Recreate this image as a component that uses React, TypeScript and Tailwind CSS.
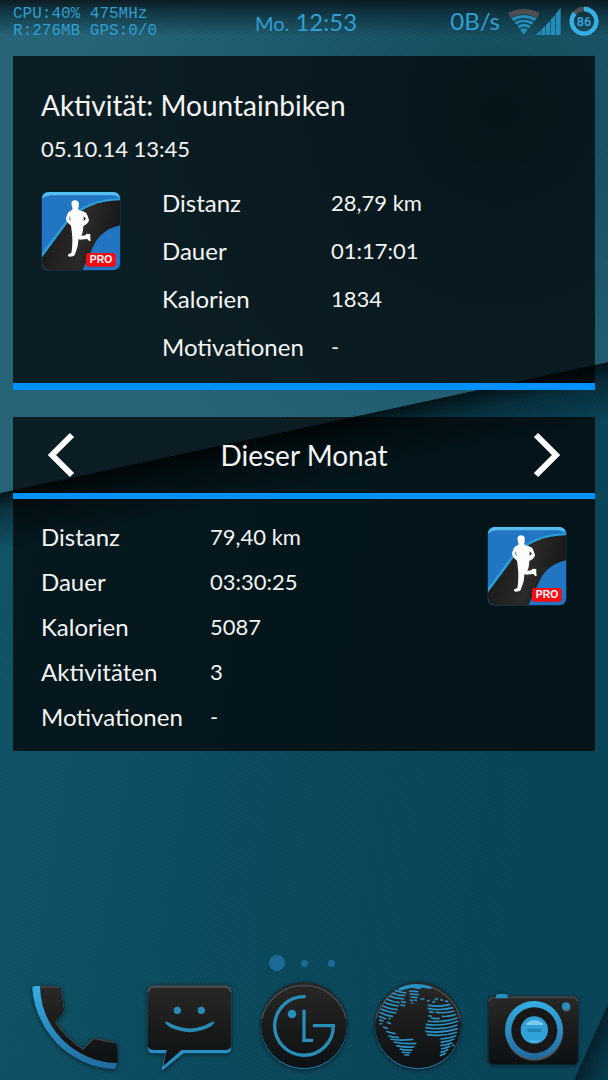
import type { ReactNode } from 'react';

type Stat = { label: string; value: string };

const ACTIVITY_STATS: Stat[] = [
  { label: 'Distanz', value: '28,79 km' },
  { label: 'Dauer', value: '01:17:01' },
  { label: 'Kalorien', value: '1834' },
  { label: 'Motivationen', value: '-' },
];

const MONTH_STATS: Stat[] = [
  { label: 'Distanz', value: '79,40 km' },
  { label: 'Dauer', value: '03:30:25' },
  { label: 'Kalorien', value: '5087' },
  { label: 'Aktivitäten', value: '3' },
  { label: 'Motivationen', value: '-' },
];

function Wallpaper() {
  return (
    <svg
      className="absolute inset-0 -z-10 h-full w-full"
      viewBox="0 0 608 1080"
      preserveAspectRatio="none"
      aria-hidden="true"
    >
      <defs>
        <linearGradient id="wp-base" x1="0" y1="0" x2="1" y2="0.3">
          <stop offset="0" stopColor="#13586c" />
          <stop offset="0.6" stopColor="#0c4b5f" />
          <stop offset="1" stopColor="#0a465a" />
        </linearGradient>
        <radialGradient id="wp-sheet" gradientUnits="userSpaceOnUse" cx="500" cy="110" r="420">
          <stop offset="0" stopColor="#124b5c" />
          <stop offset="0.55" stopColor="#205c6f" />
          <stop offset="1" stopColor="#276679" />
        </radialGradient>
        <linearGradient id="wp-shadow" gradientUnits="userSpaceOnUse" x1="304" y1="427" x2="316" y2="483">
          <stop offset="0" stopColor="#020b0f" stopOpacity="0.88" />
          <stop offset="0.35" stopColor="#021015" stopOpacity="0.45" />
          <stop offset="1" stopColor="#021015" stopOpacity="0" />
        </linearGradient>
        <linearGradient id="wp-top" x1="0" y1="0" x2="0" y2="1">
          <stop offset="0" stopColor="#0a161b" stopOpacity="0.92" />
          <stop offset="0.4" stopColor="#08222c" stopOpacity="0.6" />
          <stop offset="1" stopColor="#08222c" stopOpacity="0" />
        </linearGradient>
        <linearGradient id="wp-corner" gradientUnits="userSpaceOnUse" x1="586" y1="1056" x2="616" y2="1070">
          <stop offset="0" stopColor="#031c26" stopOpacity="0.85" />
          <stop offset="1" stopColor="#04303f" stopOpacity="0.3" />
        </linearGradient>
        <pattern id="wp-weave" width="4" height="4" patternUnits="userSpaceOnUse">
          <path d="M-1 5L5 -1M-1 1L1 -1M3 5L5 3" stroke="#000" strokeWidth="1" strokeOpacity="0.08" />
        </pattern>
      </defs>
      <rect width="608" height="1080" fill="url(#wp-base)" />
      <path d="M0 493L608 362V440L0 570Z" fill="url(#wp-shadow)" />
      <path d="M0 0H608V362L0 493Z" fill="url(#wp-sheet)" />
      <path d="M608 1004V1080H574Z" fill="url(#wp-corner)" />
      <rect width="608" height="1080" fill="url(#wp-weave)" />
      <rect width="608" height="36" fill="url(#wp-top)" />
    </svg>
  );
}

function StatusBar() {
  return (
    <header className="grid h-[45px] grid-cols-[1fr_auto_1fr] items-center pr-[9px] pl-[13px] text-[#2f9fd3]">
      <p className="font-['Liberation_Mono',monospace] text-[16px] leading-[17px] whitespace-nowrap">
        CPU:40% 475MHz
        <br />
        R:276MB GPS:0/0
      </p>
      <p className="text-[24px] leading-8 whitespace-nowrap">
        <span className="text-[20px]">Mo.</span> 12:53
      </p>
      <div className="flex items-center justify-end pb-1">
        <span className="pr-2 text-[24px] leading-8">0B/s</span>
        <svg className="-mr-1" width="32" height="30" viewBox="608 15 96 90" role="img" aria-label="WLAN">
          <path d="M608 36Q655 12 703 36L696 51Q655 28 616 51Z" fill="#4b4f52" />
          <path d="M618 52Q655 32 694 52L688 60Q655 42 624 60Z" fill="#258bb8" />
          <path d="M627 63Q655 48 685 63L679 71Q655 57 633 71Z" fill="#258bb8" />
          <path d="M636 74Q655 62 676 74L670 82Q655 73 642 82Z" fill="#258bb8" />
          <path d="M644 86Q655 78 667 86L655 101Z" fill="#258bb8" />
        </svg>
        <svg width="25" height="30" viewBox="694 15 75 90" role="img" aria-label="Mobilfunk">
          <path
            d="M694 102L708 88V102ZM710 86L722 74V102H710ZM724 72L736 59V102H724ZM738 56L751 42V102H738ZM753 39L768 20V102H753Z"
            fill="#258bb8"
          />
        </svg>
        <svg className="ml-2" width="30" height="30" viewBox="793 15 90 90" role="img" aria-label="Akku 86">
          <circle cx="838" cy="61" r="37" fill="none" stroke="#4b4f52" strokeWidth="13" />
          <circle
            cx="838"
            cy="61"
            r="37"
            fill="none"
            stroke="#36aee6"
            strokeWidth="13"
            pathLength="100"
            strokeDasharray="86 14"
            transform="rotate(-90 838 61)"
          />
          <text
            x="838"
            y="74"
            textAnchor="middle"
            fontSize="38"
            fontWeight="500"
            fill="#36aee6"
            fontFamily="Roboto, sans-serif"
          >
            86
          </text>
        </svg>
      </div>
    </header>
  );
}

function RunnerIcon() {
  return (
    <svg className="shrink-0" width="80" height="80" viewBox="33 35 240 240" role="img" aria-label="Runtastic PRO">
      <defs>
        <clipPath id="runner-clip">
          <rect x="36" y="38" width="234" height="234" rx="20" />
        </clipPath>
        <linearGradient id="runner-road" x1="0" y1="0" x2="1" y2="0.2">
          <stop offset="0" stopColor="#151515" />
          <stop offset="0.6" stopColor="#2b2a29" />
          <stop offset="1" stopColor="#181818" />
        </linearGradient>
      </defs>
      <rect x="34" y="37" width="238" height="237" rx="22" fill="#0f3551" />
      <g clipPath="url(#runner-clip)">
        <rect x="36" y="38" width="234" height="234" fill="#2275c3" />
        <path d="M36 38H270V58Q264 49 246 48H62Q46 49 36 58Z" fill="#55bdf0" />
        <path d="M36 220L110 122Q170 58 270 57V272H36Z" fill="#2b9fd9" />
        <path d="M36 234L116 126Q176 64 270 63V272H36Z" fill="url(#runner-road)" />
        <path d="M270 138Q216 150 192 196Q180 222 158 272H270Z" fill="#2275c3" />
      </g>
      <path
        fill="#fdfdfd"
        fillRule="evenodd"
        d="M126 66Q135 59 144 66Q148 72 146 80Q146 86 144 89Q147 94 159 96Q170 99 172 108L177 121Q178 127 169 135L160 140L159 152Q158 163 154 169L166 168L170 163L181 164Q180 170 182 184L178 186L172 179L149 181L146 178Q144 190 143 201Q139 214 134 227Q131 232 118 232Q111 229 116 224L124 221Q127 207 127 184Q127 169 125 155L123 139L114 131Q107 123 108 116L114 100Q118 95 126 92Q129 89 126 82Q123 72 126 66ZM120 109L117 117Q117 121 122 125ZM161 111L161 125L168 118Z"
      />
      <rect x="168" y="221" width="89" height="41" rx="8" fill="#fb0a12" />
      <text
        x="213"
        y="252"
        textAnchor="middle"
        fontSize="31"
        fontWeight="700"
        fill="#fff"
        fontFamily="'Liberation Sans', sans-serif"
      >
        PRO
      </text>
    </svg>
  );
}

function StatTable({ stats, rowClass }: { stats: Stat[]; rowClass: string }) {
  return (
    <table className="text-left leading-8">
      <tbody>
        {stats.map((stat) => (
          <tr key={stat.label} className={rowClass}>
            <th scope="row" className="w-[169px] p-0 text-[24px] font-normal">
              {stat.label}
            </th>
            <td className="p-0 text-[22px] whitespace-nowrap">{stat.value}</td>
          </tr>
        ))}
      </tbody>
    </table>
  );
}

function ActivityCard() {
  return (
    <section className="border-b-[7px] border-[#0091ff] bg-black/70 px-7 pt-[31px] pb-3">
      <h1 className="text-[28px] leading-9">Aktivität: Mountainbiken</h1>
      <p className="mt-[10px] text-[22px] leading-8">05.10.14 13:45</p>
      <div className="mt-[14px] flex items-start gap-[41px]">
        <div className="pt-3">
          <RunnerIcon />
        </div>
        <StatTable stats={ACTIVITY_STATS} rowClass="h-12" />
      </div>
    </section>
  );
}

function MonthCard() {
  return (
    <section className="bg-black/70">
      <div className="flex h-[82px] items-center justify-between border-b-[6px] border-[#0091ff] px-8">
        <button type="button" aria-label="Vorheriger Monat">
          <svg width="32" height="48" viewBox="0 0 32 48" fill="none" stroke="#fff" strokeWidth="6">
            <path d="M27 4L7 24L27 44" />
          </svg>
        </button>
        <h2 className="text-[28px] leading-9">Dieser Monat</h2>
        <button type="button" aria-label="Nächster Monat">
          <svg width="32" height="48" viewBox="0 0 32 48" fill="none" stroke="#fff" strokeWidth="6">
            <path d="M5 4L25 24L5 44" />
          </svg>
        </button>
      </div>
      <div className="flex items-start justify-between px-7 pt-[15px] pb-3">
        <StatTable stats={MONTH_STATS} rowClass="h-[45px]" />
        <div className="pt-3">
          <RunnerIcon />
        </div>
      </div>
    </section>
  );
}

function PhoneIcon() {
  return (
    <svg width="96" height="96" viewBox="81 30 288 288" aria-hidden="true">
      <path
        d="M97 56Q97 48 106 48H178Q184 49 184 57L192 116Q194 124 187 131L167 156Q199 206 249 237L277 208Q284 203 290 206L344 216Q351 219 352 227L350 287Q348 297 338 297Q246 292 172 222Q104 147 97 56Z"
        fill="url(#dock-blue)"
      />
      <path
        d="M120 48H178Q184 49 184 57L192 116Q194 124 187 131L167 156Q199 206 249 237L277 208Q284 203 290 206L344 216Q351 219 352 227V279Q262 278 190 212Q122 144 120 48Z"
        fill="url(#dock-dark)"
      />
      <path
        d="M120 51H180M167 156Q199 206 249 237L278 208Q284 204 290 207L346 218"
        fill="none"
        stroke="#3f4548"
        strokeWidth="4"
      />
    </svg>
  );
}

function MessageIcon() {
  return (
    <svg width="96" height="96" viewBox="426 30 288 288" aria-hidden="true">
      <path
        d="M443 64Q443 46 461 46H676Q694 46 694 64V232Q694 250 676 250H551L488 300Q483 299 486 292L497 250H461Q443 250 443 232Z"
        fill="#288fc0"
      />
      <path
        d="M443 62Q443 46 461 46H676Q694 46 694 62V226Q694 239 678 240H545L490 288L500 240H460Q443 239 443 226Z"
        fill="url(#dock-dark)"
      />
      <path d="M445 66Q446 50 462 50H676Q691 50 692 66" fill="none" stroke="#4a5054" strokeWidth="6" />
      <circle cx="532" cy="121" r="11" fill="#278bb8" />
      <circle cx="604" cy="121" r="11" fill="#278bb8" />
      <path d="M495 156Q500 152 505 157Q569 194 635 156Q640 152 643 157Q640 166 628 172Q570 201 510 172Q498 165 495 156Z" fill="#278bb8" />
    </svg>
  );
}

function LgIcon() {
  return (
    <svg width="96" height="96" viewBox="48 120 288 288" aria-hidden="true">
      <circle cx="192" cy="259" r="129" fill="#287fae" />
      <circle cx="192" cy="256" r="129" fill="url(#dock-dark)" />
      <path d="M66 236A129 127 0 0 1 318 236" fill="none" stroke="#4a5054" strokeWidth="4" />
      <g fill="none" stroke="#278db9" strokeWidth="10">
        <path d="M197 170A88 88 0 1 0 280 257H219" />
        <path d="M192 209V301H219" />
      </g>
      <circle cx="156" cy="222" r="13" fill="#278db9" />
    </svg>
  );
}

function GlobeIcon() {
  return (
    <svg width="96" height="96" viewBox="3 15 288 288" aria-hidden="true">
      <circle cx="147" cy="154" r="129" fill="#287fae" />
      <circle cx="147" cy="151" r="129" fill="url(#dock-dark)" />
      <path d="M21 131A129 127 0 0 1 273 131" fill="none" stroke="#4a5054" strokeWidth="4" />
      <path d="M88 40Q138 16 190 36L184 42L160 38L150 43L128 38L104 44L92 48Z" fill="#2791c4" />
      <g fill="none" stroke="#2791c4" strokeWidth="5">
        {/* North America */}
        <path d="M78 46Q92 52 112 54M68 54Q88 62 108 62M60 63Q80 71 106 72M52 72Q70 81 92 83M96 80L110 82M46 82Q64 91 90 93M94 90L108 92M40 92Q58 101 86 104M36 102Q54 111 82 114M32 112Q48 121 72 125M30 123Q40 129 52 132M30 134L44 139M58 130L64 132M54 142L66 146M32 145L38 148M42 156L56 160" />
        {/* Greenland */}
        <path d="M120 48L148 50M122 57L150 59M124 66L146 68M122 75L132 77M136 75L144 77M127 84L133 84M154 72L166 72" />
        {/* South America */}
        <path d="M52 169Q64 174 80 176M58 182Q70 186 90 188M64 192Q90 198 132 193M74 201Q106 208 142 205M82 212Q108 218 136 216M92 222Q110 227 130 225M98 231Q110 234 124 233M106 240L120 240" />
        {/* Europe and Asia */}
        <path d="M174 78L182 76M190 82L198 80M204 68V76M214 74L222 76M196 73L200 73M228 78L238 80M176 90Q206 98 244 88M176 100Q214 108 252 98M180 110L194 112M200 112Q230 116 256 108M178 122L188 124M186 128Q196 132 212 130M218 124Q240 126 262 118" />
        {/* Africa */}
        <path d="M176 138Q222 144 266 128M170 148Q220 155 268 138M169 158Q220 166 266 150M169 169Q220 176 266 161M174 179Q222 186 264 172M214 192Q240 190 262 182M215 202Q238 200 256 192M214 212Q236 210 250 203M216 222Q232 220 244 213M214 232Q228 230 238 223M213 242Q220 240 230 234M250 213L256 209" />
      </g>
    </svg>
  );
}

function CameraIcon() {
  return (
    <svg width="96" height="96" viewBox="75 60 288 288" aria-hidden="true">
      <path d="M108 112V108Q110 102 117 102H136Q144 103 145 112V118H108Z" fill="#298dbb" />
      <rect x="86" y="108" width="268" height="205" rx="14" fill="url(#dock-dark)" />
      <path d="M88 125Q89 112 104 112H338Q351 112 352 125" fill="none" stroke="#3f4548" strokeWidth="5" />
      <path d="M110 104H143V115H106Z" fill="#298dbb" />
      <circle cx="223" cy="215" r="87" fill="#4d5154" />
      <circle cx="222" cy="210" r="87" fill="url(#dock-blue)" />
      <circle cx="223" cy="211" r="69" fill="#171717" />
      <circle cx="223" cy="210" r="41" fill="#2fa1d8" />
      <path d="M199 190Q223 170 249 190V195H199Z" fill="#7cc8ee" />
      <path d="M203 206H245V216H203Z" fill="#2385b4" />
      <path d="M208 239Q224 247 239 239L232 246H215Z" fill="#72c2ea" />
      <circle cx="319" cy="142" r="13" fill="#4d5154" />
      <circle cx="318" cy="139" r="12" fill="#298dbb" />
    </svg>
  );
}

const DOCK_APPS: { name: string; icon: ReactNode }[] = [
  { name: 'Telefon', icon: <PhoneIcon /> },
  { name: 'Nachrichten', icon: <MessageIcon /> },
  { name: 'Apps', icon: <LgIcon /> },
  { name: 'Browser', icon: <GlobeIcon /> },
  { name: 'Kamera', icon: <CameraIcon /> },
];

function Dock() {
  return (
    <nav className="mt-auto px-[18px] pb-1">
      {/* gradients shared by the dock icons */}
      <svg className="absolute h-0 w-0" aria-hidden="true">
        <defs>
          <linearGradient id="dock-dark" x1="0" y1="0" x2="0" y2="1">
            <stop offset="0" stopColor="#292827" />
            <stop offset="0.55" stopColor="#191a1a" />
            <stop offset="1" stopColor="#0c1114" />
          </linearGradient>
          <linearGradient id="dock-blue" x1="0" y1="0" x2="0" y2="1">
            <stop offset="0" stopColor="#36aee6" />
            <stop offset="1" stopColor="#216a9d" />
          </linearGradient>
        </defs>
      </svg>
      <div className="mx-auto grid h-4 w-[81px] grid-cols-3 place-items-center">
        <span className="size-4 rounded-full bg-[#1c6b96]" />
        <span className="size-[7px] rounded-full bg-[#1c6b96]" />
        <span className="size-[7px] rounded-full bg-[#1c6b96]" />
      </div>
      <div className="mt-[9px] grid grid-cols-5">
        {DOCK_APPS.map((app) => (
          <button
            key={app.name}
            type="button"
            aria-label={app.name}
            className="flex justify-center drop-shadow-[0_1px_2px_rgba(0,0,0,0.6)]"
          >
            {app.icon}
          </button>
        ))}
      </div>
    </nav>
  );
}

export default function App() {
  return (
    <div className="relative isolate flex min-h-screen flex-col overflow-hidden font-['Lato',sans-serif] text-[#f4f4f4]">
      <Wallpaper />
      <StatusBar />
      <main className="flex flex-col gap-[27px] px-[13px] pt-[11px] pb-6">
        <ActivityCard />
        <MonthCard />
      </main>
      <Dock />
    </div>
  );
}
